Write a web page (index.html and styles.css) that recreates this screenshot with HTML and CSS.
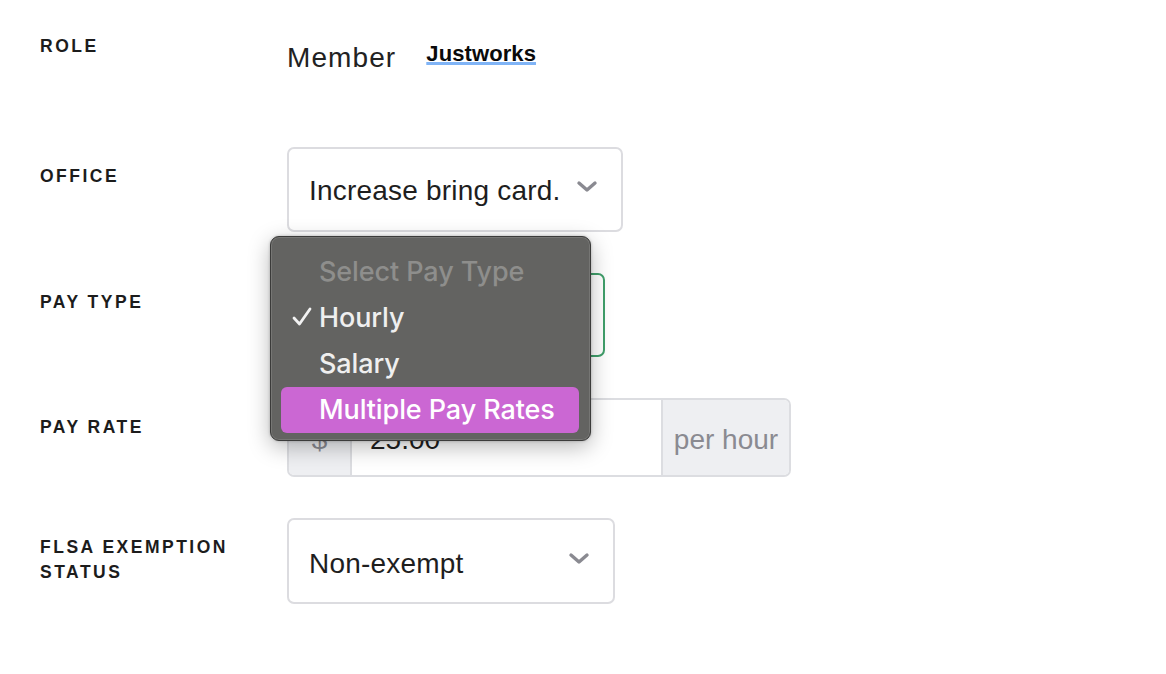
FILE: index.html
```html
<!DOCTYPE html>
<html>
<head>
<meta charset="utf-8">
<link rel="stylesheet" href="styles.css">
</head>
<body>
<div class="form">
  <div class="label">ROLE</div>
  <div class="role">
    <span class="member">Member</span>
    <span class="brand">Justworks</span>
  </div>

  <div class="label">OFFICE</div>
  <div>
    <div class="select office">
      <span class="select-text">Increase bring card.</span>
      <svg class="chev" width="22" height="13" viewBox="0 0 22 13"><path d="M3 3 L11 10 L19 3" fill="none" stroke="#8a8a91" stroke-width="3.4" stroke-linecap="round" stroke-linejoin="round"/></svg>
    </div>
  </div>

  <div class="label">PAY TYPE</div>
  <div class="paytype-wrap">
    <div class="select paytype">
      <span class="select-text">Hourly</span>
    </div>
    <div class="menu">
      <div class="item placeholder">Select Pay Type</div>
      <div class="item checked">
        <svg class="check" width="20" height="20" viewBox="0 0 20 20"><path d="M2 11 L7.5 17 L18 2" fill="none" stroke="#f2f2f2" stroke-width="2.8" stroke-linecap="round" stroke-linejoin="round"/></svg>
        Hourly
      </div>
      <div class="item">Salary</div>
      <div class="item active">Multiple Pay Rates</div>
    </div>
  </div>

  <div class="label">PAY RATE</div>
  <div>
    <div class="group">
      <div class="addon dollar">$</div>
      <div class="input">25.00</div>
      <div class="addon per">per hour</div>
    </div>
  </div>

  <div class="label">FLSA EXEMPTION<br>STATUS</div>
  <div>
    <div class="select flsa">
      <span class="select-text">Non-exempt</span>
      <svg class="chev" width="22" height="13" viewBox="0 0 22 13"><path d="M3 3 L11 10 L19 3" fill="none" stroke="#8a8a91" stroke-width="3.4" stroke-linecap="round" stroke-linejoin="round"/></svg>
    </div>
  </div>
</div>
</body>
</html>
```
FILE: styles.css
```css
html, body {
  margin: 0;
  padding: 0;
  background: #ffffff;
}

body {
  font-family: "Liberation Sans", Arial, sans-serif;
  color: #1e1e1e;
}

.form {
  display: grid;
  grid-template-columns: 247px auto;
  row-gap: 41px;
  padding: 17px 0 0 40px;
  align-items: start;
}

.label {
  font-size: 17.5px;
  font-weight: bold;
  letter-spacing: 2.5px;
  line-height: 25px;
  padding-top: 17px;
  color: #1c1c1c;
}

.role {
  height: 89px;
  display: flex;
  align-items: flex-start;
  padding-top: 24px;
  box-sizing: border-box;
}

.member {
  font-size: 28px;
  line-height: 34px;
  letter-spacing: 1.1px;
  color: #222222;
}

.brand {
  margin-left: 30px;
  font-size: 22px;
  line-height: 26px;
  font-weight: bold;
  letter-spacing: 0.1px;
  color: #0a0a0a;
  text-decoration: underline;
  text-decoration-color: #80b4f6;
  text-decoration-thickness: 3px;
  text-underline-offset: 1px;
}

.select {
  box-sizing: border-box;
  border: 2px solid #dcdce0;
  border-radius: 7px;
  background: #fff;
  display: flex;
  align-items: center;
  justify-content: space-between;
  padding: 0 23px 0 20px;
}

.select-text {
  font-size: 28px;
  line-height: 34px;
  letter-spacing: 0.2px;
  color: #1e1e1e;
}

.chev {
  margin-top: -6px;
  display: block;
}

.office {
  width: 336px;
  height: 85px;
  padding-top: 2px;
}

.office .chev {
  margin-top: -9px;
}

.paytype-wrap {
  position: relative;
}

.paytype {
  width: 318px;
  height: 84px;
  border-color: #3f9f6a;
}

.flsa {
  width: 328px;
  height: 86px;
  padding-top: 5px;
}

.flsa .chev {
  margin-top: -11px;
}

.menu {
  position: absolute;
  left: -17px;
  top: -37px;
  width: 321px;
  height: 205px;
  box-sizing: border-box;
  padding: 12px 11px 9px 10px;
  background: #636361;
  border: 1px solid #3b3b3a;
  border-radius: 9px;
  box-shadow: inset 0 0 0 1px rgba(255,255,255,0.12), 0 6px 22px rgba(0,0,0,0.28), 0 0 3px rgba(0,0,0,0.25);
  font-family: Inter, "Liberation Sans", sans-serif;
  z-index: 5;
}

.item {
  position: relative;
  height: 46px;
  line-height: 46px;
  padding-left: 38px;
  font-size: 27px;
  font-weight: 500;
  letter-spacing: -0.1px;
  color: #efefef;
  border-radius: 6px;
  white-space: nowrap;
}

.item.placeholder {
  color: #8e8e8c;
}

.item.active {
  background: #cb67d3;
  color: #ffffff;
}

.check {
  position: absolute;
  left: 11px;
  top: 12px;
}

.group {
  display: flex;
  width: 504px;
  height: 79px;
  box-sizing: border-box;
  border: 2px solid #dcdde1;
  border-radius: 7px;
  overflow: hidden;
}

.addon {
  box-sizing: border-box;
  background: #eeeff2;
  color: #8a8a91;
  font-size: 28px;
  display: flex;
  align-items: center;
  justify-content: center;
  padding-top: 5px;
}

.dollar {
  width: 63px;
  border-right: 2px solid #dcdde1;
}

.input {
  box-sizing: border-box;
  width: 309px;
  background: #fff;
  font-size: 28px;
  padding-left: 18px;
  display: flex;
  align-items: center;
  padding-top: 5px;
  color: #1e1e1e;
}

.per {
  flex: 1;
  border-left: 2px solid #dcdde1;
}
```
